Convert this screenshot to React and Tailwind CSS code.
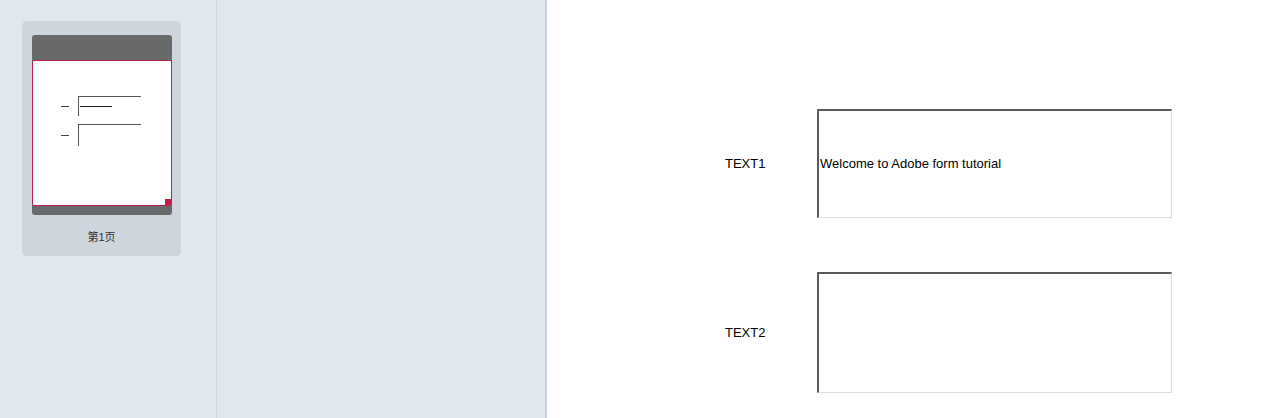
import React from "react";

function Thumbnail() {
  return (
    <div className="mx-[9px] mt-[14px] flex w-[140px] flex-col overflow-hidden rounded-[3px] bg-[#67696b]">
      <div className="h-[25px]" />
      <div className="relative h-[146px] rounded-[2px] border border-[#b3264a] bg-white">
        <div className="mt-[35px] flex items-center">
          <div className="ml-[28px] h-[1px] w-[8px] bg-[#444]" />
          <div className="ml-[9px] flex h-[20px] w-[63px] items-center border-t border-l border-[#555] border-r-[#eee] border-b-[#eee]">
            <div className="ml-[1px] h-[1px] w-[32px] bg-[#222]" />
          </div>
        </div>
        <div className="mt-[8px] flex items-center">
          <div className="ml-[28px] h-[1px] w-[8px] bg-[#444]" />
          <div className="ml-[9px] h-[22px] w-[63px] border-t border-l border-[#555] border-r-[#eee] border-b-[#eee]" />
        </div>
        <div className="absolute bottom-0 right-0 h-[6px] w-[6px] bg-[#c21e45]" />
      </div>
      <div className="h-[9px]" />
    </div>
  );
}

function Field({ label, text, height, top }) {
  return (
    <div className={`flex items-center ${top}`}>
      <div className="w-[92px] text-[13px] text-black">{label}</div>
      <div
        className={`flex ${height} w-[355px] items-center border-t-2 border-l-2 border-t-[#5a5a5a] border-l-[#5a5a5a] border-r border-b border-r-[#dedede] border-b-[#dedede] bg-white`}
      >
        <span className="pl-[1px] text-[13px] text-black">{text}</span>
      </div>
    </div>
  );
}

export default function App() {
  return (
    <div
      className="flex h-[418px] w-[1280px] overflow-hidden bg-white"
      style={{ fontFamily: '"Liberation Sans", Arial, "Noto Sans CJK SC", sans-serif' }}
    >
      <div className="flex w-[216px] shrink-0 flex-col bg-[#e2e8f0]">
        <div className="ml-[22px] mt-[21px] flex h-[235px] w-[159px] flex-col items-center rounded-[5px] bg-[#cfd5dd]">
          <Thumbnail />
          <div className="mt-[14px] text-[11px] text-[#333]">第1页</div>
        </div>
      </div>
      <div className="w-px shrink-0 bg-[#cdd5de]" />
      <div className="w-[328px] shrink-0 bg-[#e1e8f0]" />
      <div className="w-[2px] shrink-0 bg-[#c8ced5]" />
      <div className="flex flex-1 flex-col bg-white pl-[178px]">
        <Field
          label="TEXT1"
          text="Welcome to Adobe form tutorial"
          height="h-[109px]"
          top="mt-[109px]"
        />
        <Field label="TEXT2" text="" height="h-[121px]" top="mt-[54px]" />
      </div>
    </div>
  );
}
